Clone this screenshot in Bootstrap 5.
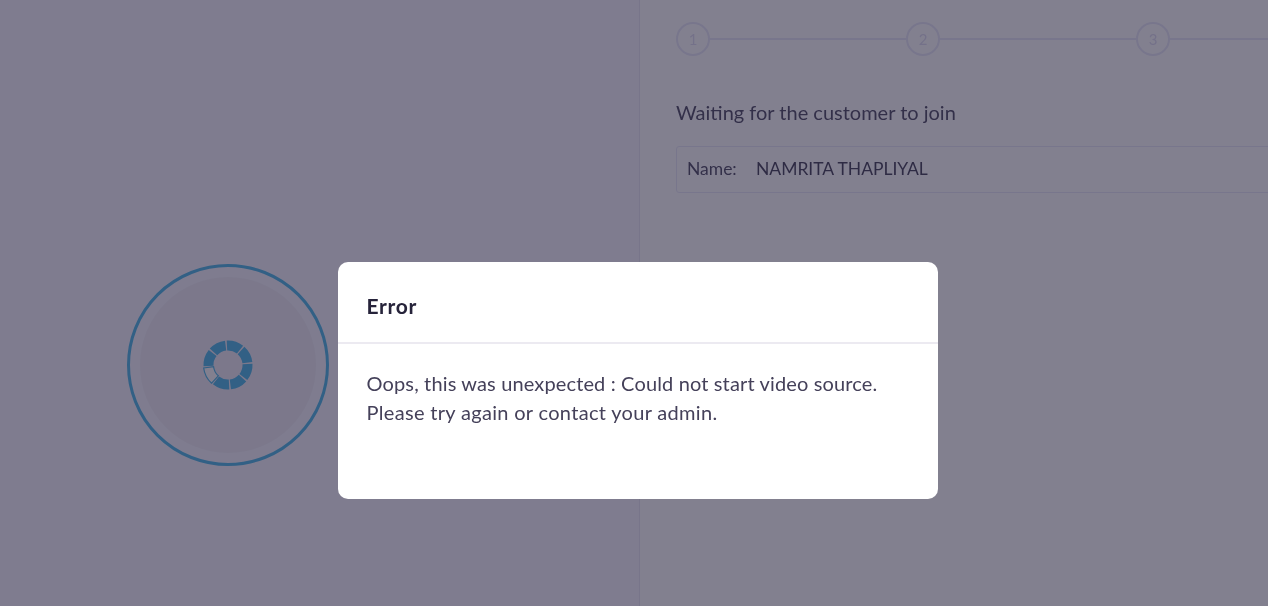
<!DOCTYPE html>
<html lang="en">
<head>
    <meta charset="UTF-8">
    <meta name="viewport" content="width=device-width, initial-scale=1.0">
    <title>Video call</title>
    <link href="https://cdn.jsdelivr.net/npm/bootstrap@5.3.0/dist/css/bootstrap.min.css" rel="stylesheet">
    <style>
        body {
            font-family: Lato, "Noto Sans", sans-serif;
            color: #2f2b44;
            height: 606px;
            overflow: hidden;
        }

        .call-wrap {
            height: 606px;
            filter: blur(.5px);
        }

        .video-pane {
            width: 640px;
            background-color: #f7f5ff;
            border-right: 1px solid #e6e3f2;
            padding: 263.5px 0 0 127px;
        }

        .video-ring {
            width: 202px;
            height: 202px;
            border: 3.5px solid #38aee5;
            border-radius: 50%;
            padding: 10px;
        }

        .video-disc {
            width: 100%;
            height: 100%;
            border-radius: 50%;
            background-color: #efecf6;
        }

        .loader-seg { fill: #38aee5; }
        .loader-seg-off { fill: #fff; stroke: #38aee5; stroke-width: 1.2; }

        .info-pane {
            padding: 22px 0 0 36px;
            background-color: #fff;
            overflow: hidden;
        }

        .step-row { width: 700px; }

        .step-item { width: 230px; flex: none; }

        .step-dot {
            width: 34px;
            height: 34px;
            flex: none;
            border: 2px solid #e6e6f7;
            border-radius: 50%;
            color: #dcdaf0;
            font-size: 15px;
        }

        .step-line { height: 2px; background-color: #e6e6f7; }

        .wait-text {
            font-size: 20px;
            margin: 43px 0 21px;
            line-height: 26px;
            color: #3b3752;
        }

        .name-box {
            width: 700px;
            height: 47px;
            border: 1px solid #e6e6f7;
            border-radius: 3px;
            padding-left: 10px;
            font-size: 17.5px;
            letter-spacing: -.02px;
        }

        .name-label { width: 69px; color: #3b3752; }

        .modal-backdrop.show {
            background-color: rgb(47, 43, 68);
            opacity: .6;
        }

        .error-dialog {
            max-width: 600.5px;
            margin: 262px 0 0 337.5px;
        }

        .error-dialog .modal-content {
            height: 237px;
            border: 0;
            border-radius: 10px;
        }

        .error-dialog .modal-header {
            height: 82px;
            padding: 8px 29px 0;
            border-bottom: 2px solid #eceaf1;
        }

        .error-dialog .modal-title {
            font-size: 21px;
            font-weight: 700;
            letter-spacing: .7px;
            color: #26233a;
        }

        .error-dialog .modal-body {
            padding: 25px 29px;
            font-size: 20px;
            letter-spacing: .14px;
            line-height: 29px;
            color: #45415a;
        }

        .error-hint { letter-spacing: .32px; }
    </style>
</head>
<body>
    <div class="call-wrap d-flex">
        <div class="video-pane flex-shrink-0">
            <div class="video-ring">
                <div class="video-disc d-flex align-items-center justify-content-center">
                    <svg width="50" height="50" viewBox="-25 -25 50 50">
                        <defs>
                            <path id="seg" d="M-8.6 -22.95A24.5 24.5 0 0 1 8.6 -22.95L5.1 -13.6A14.5 14.5 0 0 0 -5.1 -13.6Z"/>
                        </defs>
                        <use href="#seg" class="loader-seg" transform="rotate(17.5)"/>
                        <use href="#seg" class="loader-seg" transform="rotate(62.5)"/>
                        <use href="#seg" class="loader-seg" transform="rotate(107.5)"/>
                        <use href="#seg" class="loader-seg" transform="rotate(152.5)"/>
                        <use href="#seg" class="loader-seg" transform="rotate(197.5)"/>
                        <use href="#seg" class="loader-seg-off" transform="rotate(242.5)"/>
                        <use href="#seg" class="loader-seg" transform="rotate(287.5)"/>
                        <use href="#seg" class="loader-seg" transform="rotate(332.5)"/>
                    </svg>
                </div>
            </div>
        </div>

        <div class="info-pane flex-grow-1">
            <div class="step-row d-flex">
                <div class="step-item d-flex align-items-center">
                    <div class="step-dot d-flex align-items-center justify-content-center">1</div>
                    <div class="step-line flex-grow-1"></div>
                </div>
                <div class="step-item d-flex align-items-center">
                    <div class="step-dot d-flex align-items-center justify-content-center">2</div>
                    <div class="step-line flex-grow-1"></div>
                </div>
                <div class="step-item d-flex align-items-center">
                    <div class="step-dot d-flex align-items-center justify-content-center">3</div>
                    <div class="step-line flex-grow-1"></div>
                </div>
            </div>
            <p class="wait-text">Waiting for the customer to join</p>
            <div class="name-box d-flex align-items-center">
                <span class="name-label">Name:</span>
                <span>NAMRITA THAPLIYAL</span>
            </div>
        </div>
    </div>

    <div class="modal-backdrop fade show"></div>
    <div class="modal fade show d-block" tabindex="-1">
        <div class="modal-dialog error-dialog">
            <div class="modal-content">
                <div class="modal-header">
                    <h5 class="modal-title">Error</h5>
                </div>
                <div class="modal-body">
                    Oops, this was unexpected : Could not start video source.<br>
                    <span class="error-hint">Please try again or contact your admin.</span>
                </div>
            </div>
        </div>
    </div>

    <script src="https://cdn.jsdelivr.net/npm/bootstrap@5.3.0/dist/js/bootstrap.bundle.min.js"></script>
</body>
</html>
